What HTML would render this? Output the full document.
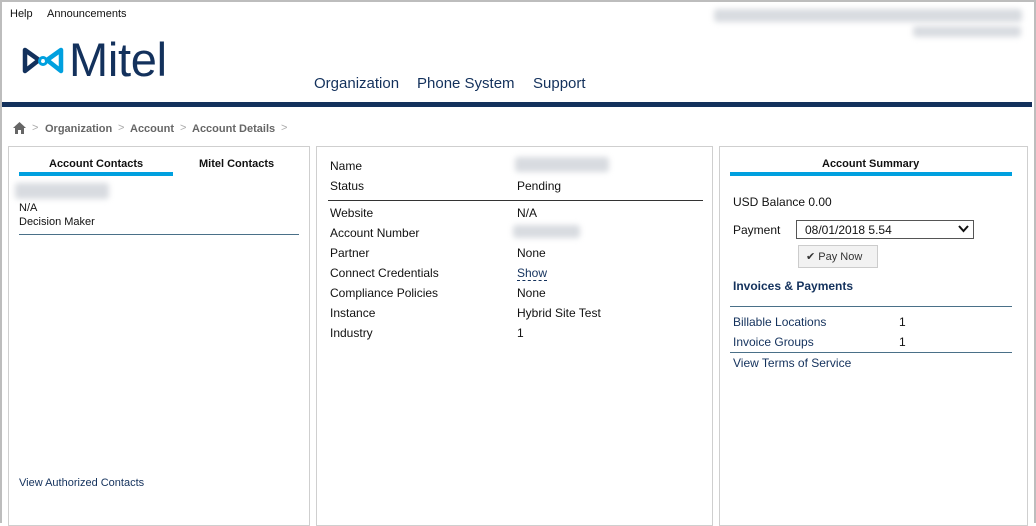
<!DOCTYPE html>
<html><head><style>
*{margin:0;padding:0;box-sizing:border-box}
body{width:1036px;height:523px;overflow:hidden;background:#fff;font-family:"Liberation Sans",Arial,sans-serif;color:#111;position:relative}
.frame{position:absolute;inset:0;border:2px solid #bdbdbd;border-bottom:none}
.a{position:absolute;white-space:nowrap}
.blur{position:absolute;background:#d8dbe0;filter:blur(3px);border-radius:3px}
.panel{position:absolute;top:146px;height:380px;border:1px solid #cfcfcf;background:#fff}
.f12{font-size:12px}
</style></head><body>
<div class="frame"></div>
<div class="a f12" style="left:10px;top:8px;font-size:11px">Help</div>
<div class="a f12" style="left:47px;top:8px;font-size:11px">Announcements</div>
<div class="blur" style="left:714px;top:9px;width:308px;height:13px"></div>
<div class="blur" style="left:913px;top:26px;width:108px;height:11px"></div>
<svg class="a" style="left:21px;top:45px" width="44" height="32" viewBox="0 0 44 32">
<path d="M4 5 L18 15 L4 26 Z" fill="none" stroke="#13315c" stroke-width="4.5" stroke-linejoin="round"/>
<path d="M40 5 L26 15 L40 26 Z" fill="none" stroke="#00a0df" stroke-width="4.5" stroke-linejoin="round"/>
<circle cx="22" cy="16" r="3.5" fill="none" stroke="#00a0df" stroke-width="3"/>
</svg>
<div class="a" style="left:69px;top:32px;font-size:47px;color:#13315c;letter-spacing:-0.3px">Mitel</div>
<div class="a" style="left:314px;top:75px;font-size:15px;color:#13315c">Organization</div>
<div class="a" style="left:417px;top:75px;font-size:15px;color:#13315c">Phone System</div>
<div class="a" style="left:533px;top:75px;font-size:15px;color:#13315c">Support</div>
<div class="a" style="left:2px;top:102px;width:1030px;height:5px;background:#13315c"></div>
<svg class="a" style="left:13px;top:122px" width="13" height="12" viewBox="0 0 13 12"><path d="M6.5 0 L13 6 L11 6 L11 12 L8 12 L8 8 L5 8 L5 12 L2 12 L2 6 L0 6 Z" fill="#666"/></svg>
<div class="a" style="left:32px;top:122px;font-size:11px;color:#aaa">&gt;</div>
<div class="a" style="left:45px;top:123px;font-size:11px;font-weight:bold;color:#666">Organization</div>
<div class="a" style="left:118px;top:122px;font-size:11px;color:#aaa">&gt;</div>
<div class="a" style="left:130px;top:123px;font-size:11px;font-weight:bold;color:#666">Account</div>
<div class="a" style="left:180px;top:122px;font-size:11px;color:#aaa">&gt;</div>
<div class="a" style="left:192px;top:123px;font-size:11px;font-weight:bold;color:#666">Account Details</div>
<div class="a" style="left:281px;top:122px;font-size:11px;color:#aaa">&gt;</div>

<div class="panel" style="left:8px;width:302px"></div>
<div class="a" style="left:49px;top:158px;font-size:11px;font-weight:bold">Account Contacts</div>
<div class="a" style="left:199px;top:158px;font-size:11px;font-weight:bold">Mitel Contacts</div>
<div class="a" style="left:19px;top:172px;width:154px;height:4px;background:#00a0df"></div>
<div class="blur" style="left:15px;top:183px;width:94px;height:16px"></div>
<div class="a" style="left:19px;top:202px;font-size:11px">N/A</div>
<div class="a" style="left:19px;top:216px;font-size:11px">Decision Maker</div>
<div class="a" style="left:19px;top:234px;width:280px;height:1px;background:#4a7088"></div>
<div class="a" style="left:19px;top:477px;font-size:11px;color:#13315c">View Authorized Contacts</div>

<div class="panel" style="left:316px;width:397px"></div>
<div class="a f12" style="left:330px;top:159px">Name</div>
<div class="blur" style="left:515px;top:157px;width:94px;height:15px"></div>
<div class="a f12" style="left:330px;top:179px">Status</div>
<div class="a f12" style="left:517px;top:179px">Pending</div>
<div class="a" style="left:328px;top:200px;width:375px;height:1px;background:#333"></div>
<div class="a f12" style="left:330px;top:206px">Website</div><div class="a f12" style="left:517px;top:206px">N/A</div>
<div class="a f12" style="left:330px;top:226px">Account Number</div>
<div class="blur" style="left:513px;top:225px;width:67px;height:13px"></div>
<div class="a f12" style="left:330px;top:246px">Partner</div><div class="a f12" style="left:517px;top:246px">None</div>
<div class="a f12" style="left:330px;top:266px">Connect Credentials</div><div class="a f12" style="left:517px;top:266px;color:#13315c;border-bottom:1px dashed #13315c;line-height:14px">Show</div>
<div class="a f12" style="left:330px;top:286px">Compliance Policies</div><div class="a f12" style="left:517px;top:286px">None</div>
<div class="a f12" style="left:330px;top:306px">Instance</div><div class="a f12" style="left:517px;top:306px">Hybrid Site Test</div>
<div class="a f12" style="left:330px;top:326px">Industry</div><div class="a f12" style="left:517px;top:326px">1</div>

<div class="panel" style="left:719px;width:309px"></div>
<div class="a" style="left:822px;top:158px;font-size:11px;font-weight:bold">Account Summary</div>
<div class="a" style="left:730px;top:172px;width:282px;height:4px;background:#00a0df"></div>
<div class="a f12" style="left:733px;top:195px">USD Balance 0.00</div>
<div class="a f12" style="left:733px;top:223px">Payment</div>
<div class="a" style="left:796px;top:220px;width:178px;height:19px;border:1px solid #555"></div>
<div class="a f12" style="left:805px;top:223px">08/01/2018 5.54</div>
<svg class="a" style="left:958px;top:225px" width="11" height="8" viewBox="0 0 11 8"><path d="M1 1 L5.5 6 L10 1" fill="none" stroke="#111" stroke-width="2"/></svg>
<div class="a" style="left:798px;top:245px;width:80px;height:23px;border:1px solid #ccc;background:#f2f2f2"></div>
<div class="a" style="left:806px;top:250px;font-size:11px;color:#333">✔ Pay Now</div>
<div class="a f12" style="left:733px;top:279px;font-weight:bold;color:#13315c">Invoices &amp; Payments</div>
<div class="a" style="left:730px;top:306px;width:282px;height:1px;background:#4a7088"></div>
<div class="a f12" style="left:733px;top:315px;color:#13315c">Billable Locations</div><div class="a f12" style="left:899px;top:315px">1</div>
<div class="a f12" style="left:733px;top:335px;color:#13315c">Invoice Groups</div><div class="a f12" style="left:899px;top:335px">1</div>
<div class="a" style="left:730px;top:352px;width:282px;height:1px;background:#4a7088"></div>
<div class="a f12" style="left:733px;top:356px;color:#13315c">View Terms of Service</div>
</body></html>
